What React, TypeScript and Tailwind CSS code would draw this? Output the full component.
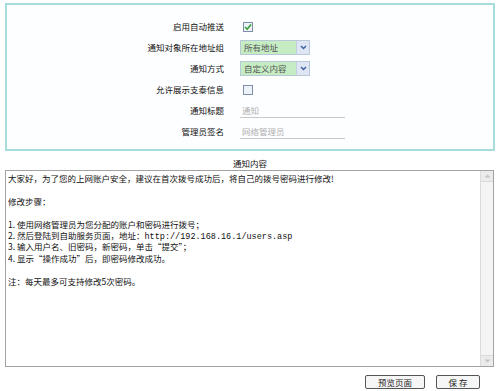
import React from 'react'

const font = { fontFamily: '"Noto Sans CJK SC", "Liberation Sans", sans-serif' }

const lines: React.ReactNode[] = [
    '大家好，为了您的上网账户安全，建议在首次拨号成功后，将自己的拨号密码进行修改!',
    '',
    '修改步骤：',
    '',
    '1. 使用网络管理员为您分配的账户和密码进行拨号；',
    <>
        2. 然后登陆到自助服务页面，地址：
        <span style={{ fontFamily: '"Liberation Mono", monospace' }}>http://192.168.16.1/users.asp</span>
    </>,
    '3. 输入用户名、旧密码，新密码，单击“提交”；',
    '4. 显示“操作成功”后，即密码修改成功。',
    '',
    '注：每天最多可支持修改5次密码。',
]

function Row({ label, children }: { label: string; children: React.ReactNode }) {
    return (
        <div className="flex items-center h-[21px]">
            <div className="w-[217px] text-right text-[#111]">{label}</div>
            <div className="pl-[16px] flex items-center">{children}</div>
        </div>
    )
}

function Checkbox({ checked }: { checked?: boolean }) {
    return (
        <div className="w-[10px] h-[10px] border border-[#7b8fa8] bg-[#eef2f6] flex items-center justify-center ml-[3px]">
            {checked && (
                <svg width="8" height="8" viewBox="0 0 8 8">
                    <path d="M1 4 L3.2 6.2 L7 1.5" stroke="#2d9a2d" strokeWidth="1.5" fill="none" />
                </svg>
            )}
        </div>
    )
}

function Select({ value }: { value: string }) {
    return (
        <div className="flex h-[15px] w-[70px] border border-[#b9c8d8] bg-[#c6ecc4]">
            <div className="flex-1 pl-[3px] leading-[13px] text-[#555]">{value}</div>
            <div className="w-[13px] bg-[#dde6f2] border-l border-[#c2cfe0] flex items-center justify-center">
                <svg width="7" height="5" viewBox="0 0 7 5">
                    <path d="M1 1 L3.5 3.5 L6 1" stroke="#3a5fa0" strokeWidth="1.4" fill="none" />
                </svg>
            </div>
        </div>
    )
}

function Input({ placeholder }: { placeholder: string }) {
    return (
        <div className="w-[105px] h-[15px] border-b border-[#c8c8c8] pl-[2px] leading-[14px] text-[#b0b0b0]">
            {placeholder}
        </div>
    )
}

export default function App() {
    return (
        <div className="w-[500px] h-[391px] bg-white text-[8.5px] relative" style={font}>
            {/* settings box */}
            <div className="mx-[5px] mt-[3px] h-[148px] border-2 border-[#a6dcdc] bg-[#fdfeff] pt-[11px]">
                <Row label="启用自动推送"><Checkbox checked /></Row>
                <Row label="通知对象所在地址组"><Select value="所有地址" /></Row>
                <Row label="通知方式"><Select value="自定义内容" /></Row>
                <Row label="允许展示支泰信息"><Checkbox /></Row>
                <Row label="通知标题"><Input placeholder="通知" /></Row>
                <Row label="管理员签名"><Input placeholder="网络管理员" /></Row>
            </div>

            {/* content */}
            <div className="text-center mt-[6px] h-[12px] leading-[12px] text-[#111]">通知内容</div>
            <div className="mx-[5px] mr-[6px] mt-[1px] h-[197px] border border-[#a3a3a3] flex">
                <div className="flex-1 pl-[2px] pt-[2px] leading-[11.4px] text-[#111]">
                    {lines.map((l, i) => (
                        <div key={i} className="h-[11.4px] whitespace-nowrap">{l}</div>
                    ))}
                </div>
                <div className="w-[13px] bg-[#f4f4f4] border-l border-[#dcdcdc] flex flex-col justify-between">
                    <div className="h-[11px] flex items-center justify-center bg-[#ebebeb] border-b border-[#dadada]">
                        <svg width="7" height="4" viewBox="0 0 7 4"><path d="M0.5 3.5 L3.5 0.5 L6.5 3.5 Z" fill="#c4c4c4" /></svg>
                    </div>
                    <div className="h-[11px] flex items-center justify-center bg-[#ebebeb] border-t border-[#dadada]">
                        <svg width="7" height="4" viewBox="0 0 7 4"><path d="M0.5 0.5 L3.5 3.5 L6.5 0.5 Z" fill="#c4c4c4" /></svg>
                    </div>
                </div>
            </div>

            {/* buttons */}
            <div className="flex justify-end gap-[11px] pr-[20px] mt-[8px]">
                <button className="w-[60px] h-[14px] border border-[#555] rounded-[2px] bg-[#f6f6f6] leading-[12px] text-[#222]">预览页面</button>
                <button className="w-[44px] h-[14px] border border-[#555] rounded-[2px] bg-[#f6f6f6] leading-[12px] text-[#222]">保&nbsp;存</button>
            </div>
        </div>
    )
}
